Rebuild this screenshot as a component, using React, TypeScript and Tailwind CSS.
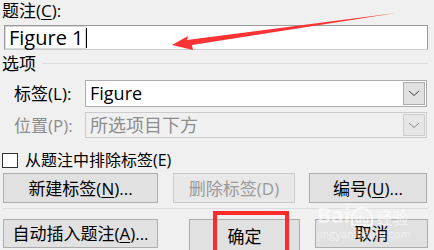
const font = "font-['Open_Sans','Noto_Sans_CJK_SC',sans-serif]";

function Btn({
  children,
  className = "",
  disabled = false,
}: {
  children: React.ReactNode;
  className?: string;
  disabled?: boolean;
}) {
  return (
    <div
      className={`flex items-center justify-center border text-[17px] leading-none ${
        disabled
          ? "border-[#cccccc] bg-[#e8e8e8] text-[#9a9a9a]"
          : "border-[#adadad] bg-[#e1e1e1] text-black"
      } ${className}`}
    >
      {children}
    </div>
  );
}

function Chevron({ color = "#444" }: { color?: string }) {
  return (
    <svg width="12" height="7" viewBox="0 0 12 7">
      <path d="M1 1l5 4.5L11 1" fill="none" stroke={color} strokeWidth="1" />
    </svg>
  );
}

function Combo({ value, disabled = false }: { value: string; disabled?: boolean }) {
  return (
    <div
      className={`flex h-full w-[342px] items-stretch border ${
        disabled ? "border-[#cccccc] bg-[#f0f0f0]" : "border-[#adadad] bg-white"
      }`}
    >
      <span
        className={`flex flex-1 items-center pl-[4px] text-[18px] ${
          disabled ? "text-[#8d8d8d]" : "text-black"
        }`}
      >
        {value}
      </span>
      <span
        className={`m-[1px] flex w-[22px] items-center justify-center border ${
          disabled ? "border-[#cccccc] bg-[#e6e6e6]" : "border-[#adadad] bg-[#e1e1e1]"
        }`}
      >
        <Chevron color={disabled ? "#888" : "#444"} />
      </span>
    </div>
  );
}

export default function App() {
  return (
    <div className={`relative h-[250px] w-[434px] overflow-hidden bg-[#f0f0f0] ${font}`}>
      {/* 题注 */}
      <div className="flex h-[25px] items-start pl-[2px] pt-[1px] text-[17px] leading-[20px]">
        题注(<span className="underline underline-offset-2">C</span>):
      </div>
      <div className="ml-[4px] flex h-[25px] w-[424px] items-center border border-[#9a9a9a] border-b-[#cccccc] bg-white">
        <span className="flex h-full items-center border border-[#d8d8d8] pl-[3px] pr-[1px] text-[20px] leading-none">
          Figure 1
        </span>
        <span className="h-[20px] w-[1px] bg-black" />
      </div>

      {/* 选项 */}
      <div className="flex h-[30px] items-center gap-[6px] pl-[2px] pb-[4px]">
        <span className="text-[17px] leading-none">选项</span>
        <span className="mr-[6px] h-[1px] flex-1 bg-[#dcdcdc]" />
      </div>

      <div className="flex h-[27px] items-center">
        <span className="w-[85px] pl-[14px] text-[17px] leading-none">标签(L):</span>
        <Combo value="Figure" />
      </div>
      <div className="mt-[5px] flex h-[26px] items-center">
        <span className="w-[85px] pl-[14px] text-[17px] leading-none text-[#8d8d8d]">位置(P):</span>
        <Combo value="所选项目下方" disabled />
      </div>

      {/* checkbox */}
      <div className="mt-[13px] flex h-[18px] items-center pl-[2px]">
        <span className="h-[15px] w-[16px] border border-[#333] bg-white" />
        <span className="ml-[7px] text-[16px] leading-none">从题注中排除标签(E)</span>
      </div>

      <div className="mt-[4px] flex h-[30px] pl-[3px]">
        <Btn className="w-[155px]">
          新建标签(<span className="underline underline-offset-2">N</span>)...
        </Btn>
        <Btn className="ml-[15px] w-[122px]" disabled>
          删除标签(D)
        </Btn>
        <Btn className="ml-[14px] w-[118px]">
          编号(<span className="underline underline-offset-2">U</span>)...
        </Btn>
      </div>

      <div className="ml-[3px] mt-[5px] h-[1px] w-[425px] bg-[#dcdcdc]" />

      <div className="mt-[10px] flex h-[29px] pl-[3px]">
        <Btn className="w-[155px]">
          自动插入题注(<span className="underline underline-offset-2">A</span>)...
        </Btn>
        <Btn className="ml-[31px] h-[34px] w-[111px] border-[#0078d7]">确定</Btn>
        <Btn className="ml-[15px] w-[113px]">取消</Btn>
      </div>

      {/* red annotation box */}
      <div className="absolute left-[213px] top-[211px] h-[45px] w-[76px] border-[4px] border-[#ff2a2a]" />

      {/* red arrow */}
      <svg className="absolute left-0 top-0" width="434" height="250" viewBox="0 0 434 250">
        <polygon points="172,45 188,36 187,40 396,13 192,45 193,50" fill="#fa3434" />
      </svg>

      {/* watermark */}
      <div className="pointer-events-none absolute left-[317px] top-[205px] flex items-end text-white/60">
        <span className="text-[21px] font-bold leading-none">Bai</span>
        <span className="ml-[1px] flex h-[19px] w-[22px] items-end justify-center rounded-t-full border-2 border-white/60 text-[11px] font-bold leading-none">
          du
        </span>
        <span className="ml-[3px] text-[16px] leading-none">经验</span>
      </div>
      <div className="pointer-events-none absolute left-[317px] top-[228px] text-[11px] leading-none text-white/50">
        jingyan.baidu.com
      </div>
    </div>
  );
}
